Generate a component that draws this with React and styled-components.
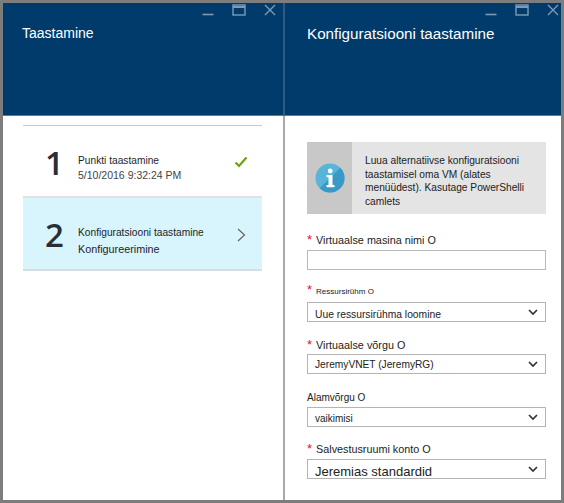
import React from 'react'
import styled, { createGlobalStyle } from 'styled-components'

const Global = createGlobalStyle`
  html, body { margin: 0; padding: 0; background: #fff; }
  body { font-family: "Liberation Sans", Arial, sans-serif; color: #1f1f1f; }
`

const Frame = styled.div`
  box-sizing: border-box;
  width: 564px;
  height: 503px;
  border: 3px solid #7d7d7d;
  display: grid;
  grid-template-columns: 280px 1fr;
  overflow: hidden;
`

const Blade = styled.section`
  display: flex;
  flex-direction: column;
  min-width: 0;
  height: 497px;
  overflow: hidden;
`

const Header = styled.header`
  box-sizing: border-box;
  height: 113px;
  flex: none;
  background: #003b6b;
  border-bottom: 1px solid #5d7c98;
  border-left: ${p => (p.$divided ? '2px solid #2b5a84' : 'none')};
  position: relative;
  color: #fff;
`

const Title = styled.h1`
  margin: 0;
  font-weight: 400;
  font-size: ${p => p.$size}px;
  line-height: 18px;
  padding: ${p => p.$top}px 0 0 ${p => p.$left}px;
`

const WindowControls = styled.div`
  position: absolute;
  top: 1px;
  right: ${p => p.$right}px;
  display: flex;
  align-items: flex-start;
  gap: 18px;
`

const MinIcon = () => (
  <svg width="12" height="14" viewBox="0 0 12 14"><path d="M0.5 10.5h11" stroke="#7f9ab3" strokeWidth="1.6" /></svg>
)
const MaxIcon = () => (
  <svg width="14" height="12" viewBox="0 0 14 12" fill="none">
    <rect x="1" y="1" width="12" height="10" stroke="#7f9ab3" strokeWidth="1.4" />
    <path d="M1 3h12" stroke="#7f9ab3" strokeWidth="2" />
  </svg>
)
const CloseIcon = () => (
  <svg width="12" height="12" viewBox="0 0 12 12" fill="none">
    <path d="M1 1l10 10M11 1L1 11" stroke="#7f9ab3" strokeWidth="1.4" />
  </svg>
)

const Controls = ({ right }) => (
  <WindowControls $right={right}>
    <MinIcon />
    <MaxIcon />
    <CloseIcon />
  </WindowControls>
)

const Steps = styled.div`
  margin: 9px 21px 0 20px;
  border-top: 1px solid #c9c9c9;
`

const Step = styled.div`
  box-sizing: border-box;
  height: ${p => p.$height}px;
  display: flex;
  align-items: center;
  background: ${p => (p.$active ? '#d8f4fc' : '#fff')};
  border-bottom: 2px solid ${p => (p.$active ? '#d5dee1' : '#e2e2e2')};
`

const StepNumber = styled.div`
  width: 55px;
  flex: none;
  padding: 3px 0 0 22px;
  box-sizing: border-box;
  font-family: "Open Sans", "Liberation Sans", sans-serif;
  font-weight: 600;
  font-size: 33px;
  line-height: 40px;
  color: #2a2f36;
`

const StepText = styled.div`
  flex: 1;
  padding-top: 14px;
`

const StepLine = styled.div`
  font-size: ${p => p.$size}px;
  line-height: ${p => p.$line}px;
  color: ${p => p.$color || '#1f1f1f'};
  white-space: nowrap;
`

const StepIcon = styled.div`
  width: 28px;
  flex: none;
  display: flex;
  box-sizing: border-box;
  padding: 2px 0 0 ${p => p.$inset || 0}px;
`

const Check = () => (
  <svg width="14" height="12" viewBox="0 0 14 12" fill="none">
    <path d="M1.5 6.5L5 10l7.5-8.5" stroke="#6aa30c" strokeWidth="2.2" />
  </svg>
)
const Chevron = () => (
  <svg width="9" height="14" viewBox="0 0 9 14" fill="none">
    <path d="M1 1l6.5 6L1 13" stroke="#666" strokeWidth="1.2" />
  </svg>
)

const Form = styled.div`
  flex: 1;
  padding: 26px 15px 0 22px;
  display: flex;
  flex-direction: column;
  border-left: 2px solid #a8a8a8;
`

const InfoBox = styled.div`
  height: 72px;
  flex: none;
  display: flex;
  background: #e4e4e4;
  margin-bottom: 19px;
`

const InfoIconCell = styled.div`
  width: 45px;
  flex: none;
  background: #c8c8c8;
  display: flex;
  align-items: center;
  justify-content: center;
`

const InfoText = styled.div`
  padding: 12px 0 0 13px;
  font-size: 10.2px;
  line-height: 13.5px;
  color: #222;
  white-space: nowrap;
`

const InfoIcon = () => (
  <svg width="30" height="30" viewBox="0 0 30 30">
    <circle cx="15" cy="15" r="14.5" fill="#59b4d9" />
    <path d="M25.3 4.7A14.5 14.5 0 0 1 4.7 25.3z" fill="#3999c6" />
    <circle cx="15.2" cy="8" r="2.4" fill="#fff" />
    <path d="M11.5 12h6v10h2v2.2h-8V22h2v-7.8h-2z" fill="#fff" />
  </svg>
)

const Field = styled.div`
  flex: none;
  margin-bottom: ${p => p.$gap}px;
`

const Label = styled.label`
  display: block;
  font-size: ${p => p.$size || 10.8}px;
  line-height: 14px;
  height: 14px;
  margin-bottom: ${p => p.$below}px;
  white-space: nowrap;
  color: #222;
`

const Star = styled.span`
  color: #e8112d;
  margin-right: 4px;
  font-size: 13px;
`

const TextInput = styled.input`
  display: block;
  box-sizing: border-box;
  width: 239px;
  height: 20px;
  padding: 0 6px;
  border: 1px solid #b9b9b9;
  background: #fff;
  outline: none;
`

const Select = styled.div`
  box-sizing: border-box;
  width: 239px;
  height: 20px;
  padding: 0 7px;
  border: 1px solid #b4b4b4;
  background: #fff;
  display: flex;
  align-items: center;
  justify-content: space-between;
  overflow: hidden;
`

const SelectValue = styled.span`
  font-size: ${p => p.$size || 10.3}px;
  line-height: 14px;
  color: #222;
  white-space: nowrap;
  transform: translateY(${p => p.$drop || 0}px);
`

const Caret = () => (
  <svg width="10" height="7" viewBox="0 0 10 7" fill="none">
    <path d="M1 1l4 4 4-4" stroke="#333" strokeWidth="1.7" />
  </svg>
)

const Dropdown = ({ value, size, drop }) => (
  <Select>
    <SelectValue $size={size} $drop={drop}>{value}</SelectValue>
    <Caret />
  </Select>
)

export default function App() {
  return (
    <>
      <Global />
      <Frame>
        <Blade>
          <Header>
            <Title $size={14} $left={19} $top={21}>Taastamine</Title>
            <Controls right={7} />
          </Header>
          <Steps>
            <Step $height={72}>
              <StepNumber>1</StepNumber>
              <StepText>
                <StepLine $size={10.2} $line={15}>Punkti taastamine</StepLine>
                <StepLine $size={10.5} $line={15} $color="#444">5/10/2016 9:32:24 PM</StepLine>
              </StepText>
              <StepIcon><Check /></StepIcon>
            </Step>
            <Step $height={73} $active>
              <StepNumber>2</StepNumber>
              <StepText>
                <StepLine $size={10.2} $line={16}>Konfiguratsiooni taastamine</StepLine>
                <StepLine $size={10.8} $line={16}>Konfigureerimine</StepLine>
              </StepText>
              <StepIcon $inset={3}><Chevron /></StepIcon>
            </Step>
          </Steps>
        </Blade>
        <Blade>
          <Header $divided>
            <Title $size={15.2} $left={22} $top={22}>Konfiguratsiooni taastamine</Title>
            <Controls right={2} />
          </Header>
          <Form>
            <InfoBox>
              <InfoIconCell><InfoIcon /></InfoIconCell>
              <InfoText>
                Luua alternatiivse konfiguratsiooni<br />
                taastamisel oma VM (alates<br />
                menüüdest). Kasutage PowerShelli<br />
                camlets
              </InfoText>
            </InfoBox>
            <Field $gap={13}>
              <Label $below={3}><Star>*</Star>Virtuaalse masina nimi O</Label>
              <TextInput />
            </Field>
            <Field $gap={16}>
              <Label $size={8} $below={5}><Star>*</Star>Ressursirühm O</Label>
              <Dropdown value="Uue ressursirühma loomine" drop={3} />
            </Field>
            <Field $gap={17}>
              <Label $below={2}><Star>*</Star>Virtuaalse võrgu O</Label>
              <Dropdown value="JeremyVNET (JeremyRG)" size={10.2} drop={1} />
            </Field>
            <Field $gap={15}>
              <Label $size={10} $below={2}>Alamvõrgu O</Label>
              <Dropdown value="vaikimisi" size={10} drop={2} />
            </Field>
            <Field $gap={0}>
              <Label $below={3}><Star>*</Star>Salvestusruumi konto O</Label>
              <Dropdown value="Jeremias standardid" size={13} drop={3} />
            </Field>
          </Form>
        </Blade>
      </Frame>
    </>
  )
}
